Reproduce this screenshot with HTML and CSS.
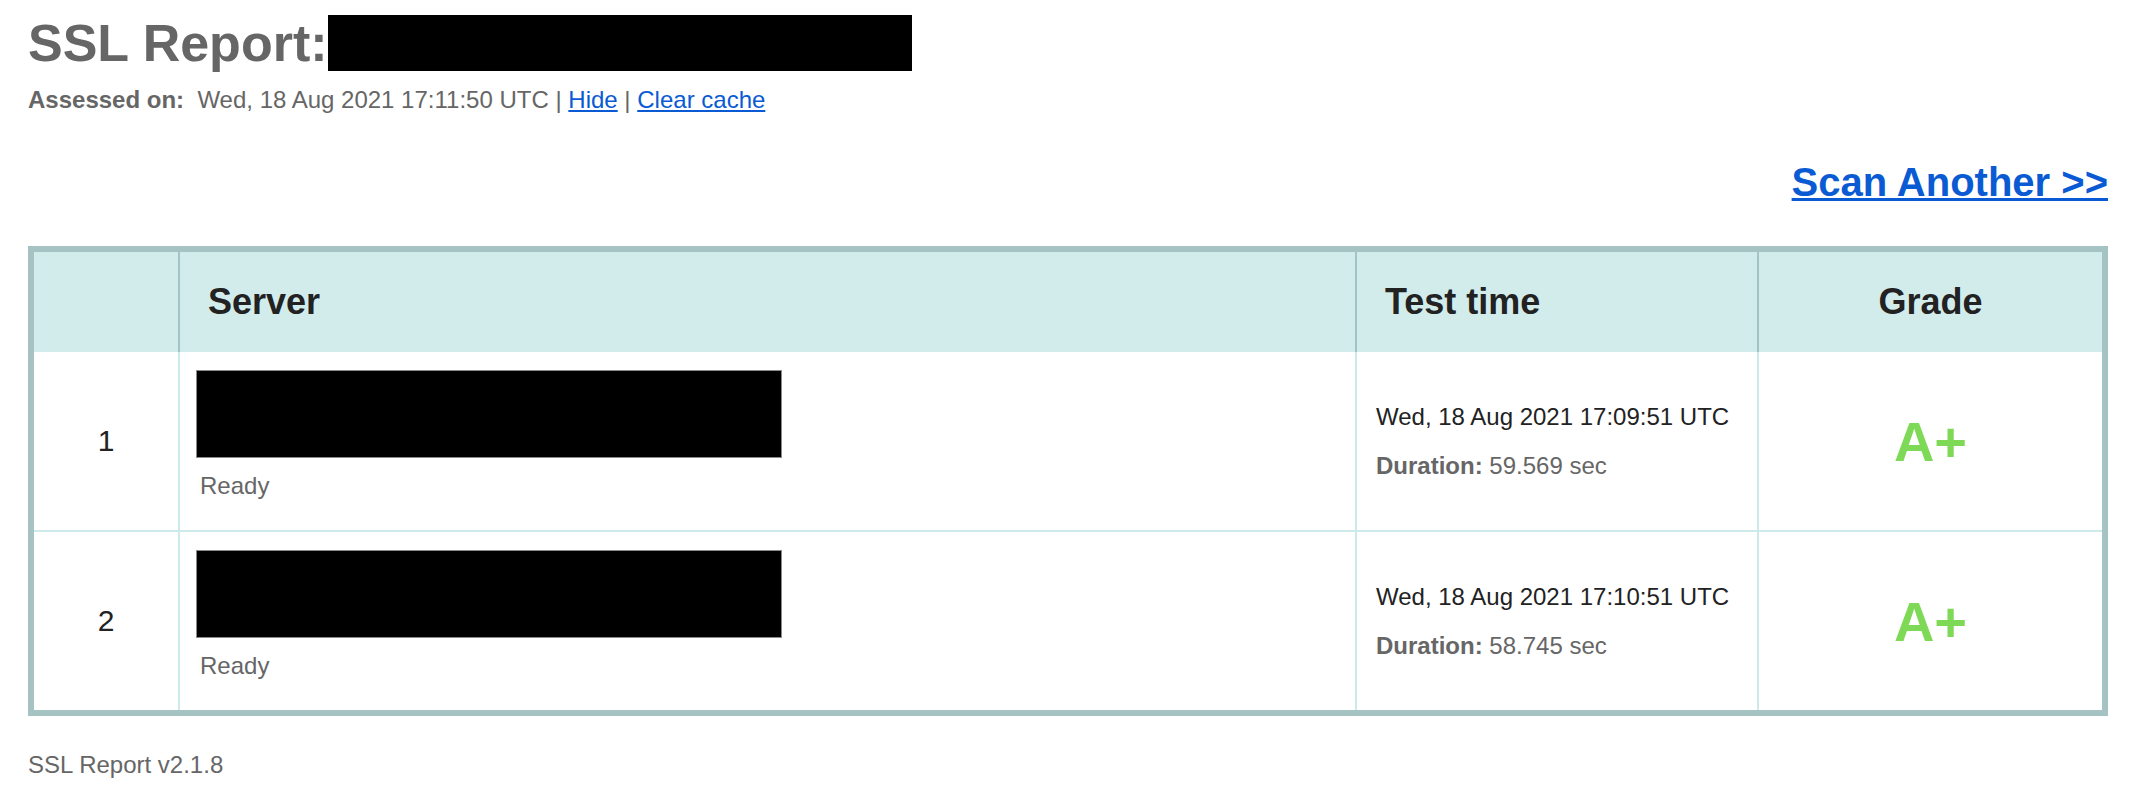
FILE: index.html
```html
<!DOCTYPE html>
<html lang="en">
<head>
<meta charset="utf-8">
<title>SSL Report</title>
<link rel="stylesheet" href="styles.css">
</head>
<body>
<div class="page">
  <h1 class="title"><span class="title-text">SSL Report:</span><span class="redact redact-title"></span></h1>
  <div class="assessed"><b>Assessed on:</b>&nbsp; Wed, 18 Aug 2021 17:11:50 UTC | <a href="#">Hide</a> | <a href="#">Clear cache</a></div>
  <div class="scan-row"><a class="scan" href="#">Scan Another &gt;&gt;</a></div>

  <div class="report">
    <div class="th"></div>
    <div class="th th-left">Server</div>
    <div class="th th-left">Test time</div>
    <div class="th th-center">Grade</div>

    <div class="td num">1</div>
    <div class="td server">
      <span class="redact redact-server"></span>
      <div class="status">Ready</div>
    </div>
    <div class="td time">
      <div class="date">Wed, 18 Aug 2021 17:09:51 UTC</div>
      <div class="duration"><b>Duration:</b> 59.569 sec</div>
    </div>
    <div class="td grade">A+</div>

    <div class="td num row2">2</div>
    <div class="td server row2">
      <span class="redact redact-server"></span>
      <div class="status">Ready</div>
    </div>
    <div class="td time row2">
      <div class="date">Wed, 18 Aug 2021 17:10:51 UTC</div>
      <div class="duration"><b>Duration:</b> 58.745 sec</div>
    </div>
    <div class="td grade row2">A+</div>
  </div>

  <div class="footer">SSL Report v2.1.8</div>
</div>
</body>
</html>
```

FILE: styles.css
```css
html, body {
  margin: 0;
  padding: 0;
  background: #ffffff;
}

body {
  font-family: "Liberation Sans", Arial, Helvetica, sans-serif;
  color: #222222;
}

.page {
  margin: 0 32px 0 28px;
}

.title {
  margin: 0;
  padding-top: 15px;
  display: flex;
  align-items: center;
  height: 56px;
  font-size: 52px;
  line-height: 56px;
  font-weight: bold;
  color: #666666;
}

.title-text {
  display: block;
}

.redact {
  display: inline-block;
  background: #000000;
}

.redact-title {
  width: 584px;
  height: 56px;
  margin-left: 0;
}

.assessed {
  margin-top: 15px;
  font-size: 24px;
  line-height: 28px;
  color: #666666;
}

.assessed a {
  color: #0a5bd3;
  text-decoration: underline;
}

.scan-row {
  margin-top: 44px;
  display: flex;
  justify-content: flex-end;
  line-height: 48px;
}

.scan {
  font-size: 40px;
  font-weight: bold;
  color: #0a5bd3;
  text-decoration: underline;
  text-decoration-thickness: 3px;
}

.report {
  margin-top: 40px;
  border: 6px solid #a5c3c3;
  display: grid;
  grid-template-columns: 144px 1fr 402px 345px;
  grid-template-rows: 100px 178px 180px;
}

.th {
  background: #d2ecec;
  border-left: 2px solid #a3c4c4;
  font-size: 36px;
  font-weight: bold;
  color: #222222;
  display: flex;
  align-items: center;
}

.th:first-child {
  border-left: none;
}

.th-left {
  padding-left: 28px;
}

.th-center {
  justify-content: center;
}

.td {
  border-left: 2px solid #cdeaea;
  background: #ffffff;
}

.td.num {
  border-left: none;
  display: flex;
  align-items: center;
  justify-content: center;
  font-size: 30px;
  color: #222222;
}

.td.row2 {
  border-top: 2px solid #cdeaea;
}

.server {
  padding: 18px 16px 0;
}

.redact-server {
  display: block;
  width: 586px;
  height: 88px;
  box-sizing: border-box;
  border: 1px solid #8a8a8a;
}

.status {
  margin-top: 14px;
  margin-left: 4px;
  font-size: 24px;
  line-height: 28px;
  color: #666666;
}

.time {
  padding-left: 19px;
  display: flex;
  flex-direction: column;
  justify-content: center;
  font-size: 24px;
  line-height: 28px;
}

.date {
  color: #222222;
}

.duration {
  margin-top: 21px;
  color: #666666;
}

.grade {
  display: flex;
  align-items: center;
  justify-content: center;
  font-size: 56px;
  font-weight: bold;
  color: #7ed957;
}

.footer {
  margin-top: 35px;
  font-size: 24px;
  line-height: 28px;
  color: #666666;
}
```
